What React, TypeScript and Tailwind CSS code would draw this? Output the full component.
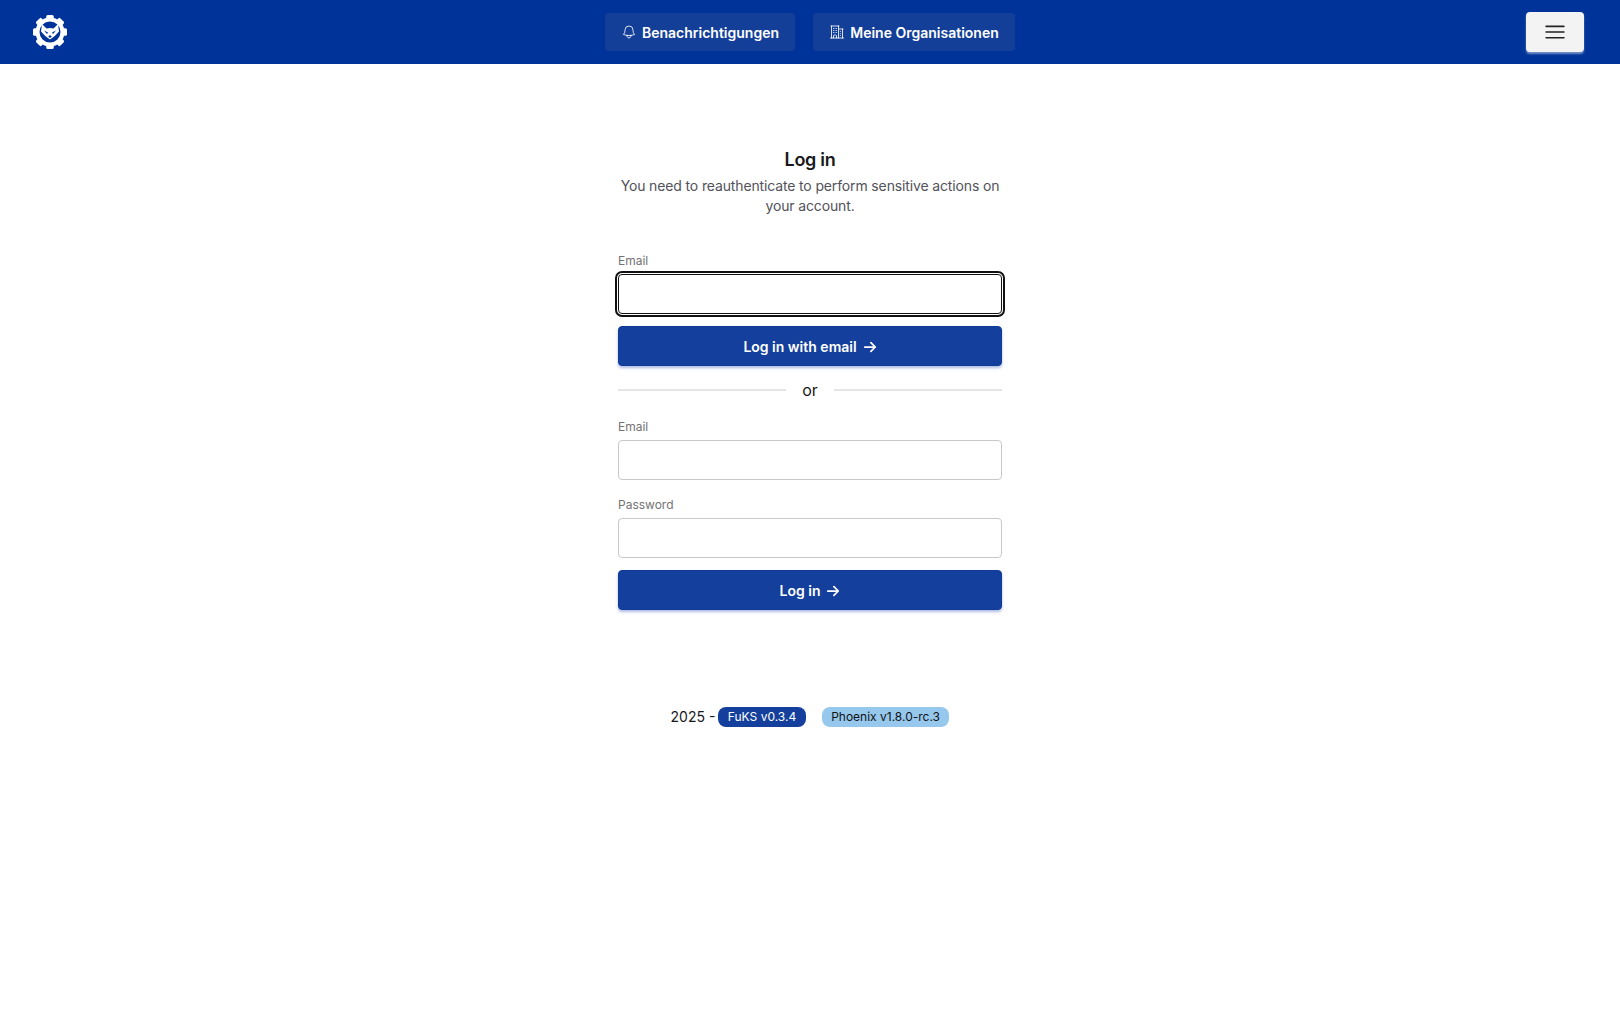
const buttonTexture = 'bg-[#143f9c] border border-[#0f3a98] shadow-[0_2px_3px_rgba(30,64,175,0.35)]';

function HeroIcon({ d, className, stroke = 1.5 }: { d: string; className: string; stroke?: number }) {
  return (
    <svg viewBox="0 0 24 24" fill="none" stroke="currentColor" strokeWidth={stroke} strokeLinecap="round" strokeLinejoin="round" className={className}>
      <path d={d} />
    </svg>
  );
}

const bellPath =
  'M14.857 17.082a23.848 23.848 0 0 0 5.454-1.31A8.967 8.967 0 0 1 18 9.75V9A6 6 0 0 0 6 9v.75a8.967 8.967 0 0 1-2.312 6.022c1.733.64 3.56 1.085 5.455 1.31m5.714 0a24.255 24.255 0 0 1-5.714 0m5.714 0a3 3 0 1 1-5.714 0';
const buildingPath =
  'M2.25 21h19.5m-18-18v18m10.5-18v18m6-13.5V21M6.75 6.75h.75m-.75 3h.75m-.75 3h.75m3-6h.75m-.75 3h.75m-.75 3h.75M6.75 21v-3.375c0-.621.504-1.125 1.125-1.125h2.25c.621 0 1.125.504 1.125 1.125V21M3 3h12m-.75 4.5H21m-3.75 3.75h.008v.008h-.008v-.008Zm0 3h.008v.008h-.008v-.008Zm0 3h.008v.008h-.008v-.008Z';
const menuPath = 'M3.75 6.75h16.5M3.75 12h16.5m-16.5 5.25h16.5';
const arrowPath = 'M13.5 4.5 21 12m0 0-7.5 7.5M21 12H3';

function Logo() {
  const teeth = [0, 45, 90, 135, 180, 225, 270, 315];
  return (
    <svg viewBox="0 0 34 34" className="w-[34px] h-[34px]">
      {teeth.map((angle) => (
        <rect key={angle} x="13.25" y="0" width="7.5" height="7" rx="1.5" fill="#fff" transform={`rotate(${angle} 17 17)`} />
      ))}
      <circle cx="17" cy="17" r="12.5" fill="#003399" stroke="#fff" strokeWidth="4" />
      {/* fox face */}
      <path d="M9 9 L13.5 13.5 Q17 12.5 20.5 13.5 L25 9 L26 16.5 Q23 20.5 17 24.5 Q11 20.5 8 16.5 Z" fill="#fff" />
      <path d="M11 15.5 L15 17.5 L14 19 Z M23 15.5 L19 17.5 L20 19 Z M15.25 21.5 L17 20 L18.75 21.5 L17 23 Z" fill="#003399" />
    </svg>
  );
}

function Field({ label, focused }: { label: string; focused?: boolean }) {
  return (
    <div>
      <label className="block text-xs leading-4 text-[#737373] mb-[5px]">{label}</label>
      <input
        type="text"
        className={
          focused
            ? 'block w-full h-[40px] rounded-[4px] bg-white border border-[#111] outline-2 outline-offset-1 outline-[#111]'
            : 'block w-full h-[40px] rounded-[4px] bg-white border border-[#c8c8c8]'
        }
      />
    </div>
  );
}

function SubmitButton({ label }: { label: string }) {
  return (
    <button className={`w-full h-[40px] rounded-[4px] flex items-center justify-center gap-[6px] pt-px text-sm font-semibold text-white ${buttonTexture}`}>
      {label}
      <HeroIcon d={arrowPath} className="w-[14px] h-[14px]" stroke={3} />
    </button>
  );
}

export default function App() {
  return (
    <div className="min-h-screen bg-white font-['Inter',sans-serif] text-[#18181b]">
      <header className="h-16 bg-[#003399] flex items-center justify-between pl-[33px] pr-9 relative">
        <Logo />
        <nav className="absolute left-[605px] top-[13px] flex gap-[18px]">
          <a className="h-[38px] w-[190px] rounded-[4px] bg-[#143f98] flex items-center justify-center gap-[5px] pt-px text-sm font-semibold text-white">
            <HeroIcon d={bellPath} className="w-4 h-4 -mt-px" stroke={1.25} />
            Benachrichtigungen
          </a>
          <a className="h-[38px] w-[202px] rounded-[4px] bg-[#143f98] flex items-center justify-center gap-[5px] pt-px text-sm font-semibold text-white">
            <HeroIcon d={buildingPath} className="w-4 h-4 -mt-px" stroke={1.25} />
            Meine Organisationen
          </a>
        </nav>
        <button className="w-[58px] h-[40px] rounded-[4px] bg-[#f3f3f3] shadow-[0_2px_2px_rgba(255,255,255,0.45)] flex items-center justify-center text-[#222]">
          <HeroIcon d={menuPath} className="w-[26px] h-[26px]" />
        </button>
      </header>

      <main className="w-96 mx-auto pt-[85px]">
        <div className="text-center">
          <h1 className="text-lg leading-[22px] font-semibold tracking-[-0.3px] text-[#18181b]">Log in</h1>
          <p className="mt-[5px] text-sm leading-5 tracking-[-0.14px] text-[#52525b]">You need to reauthenticate to perform sensitive actions on your account.</p>
        </div>

        <div className="mt-[37px] flex flex-col gap-3">
          <Field label="Email" focused />
          <SubmitButton label="Log in with email" />
        </div>

        <div className="mt-[12px] flex items-center gap-4 h-6">
          <div className="flex-1 h-[2px] bg-[#e5e5e5]" />
          <span className="text-base leading-6 text-[#18181b]">or</span>
          <div className="flex-1 h-[2px] bg-[#e5e5e5]" />
        </div>

        <div className="mt-[17px] flex flex-col gap-[17px]">
          <Field label="Email" />
          <Field label="Password" />
        </div>
        <div className="mt-3">
          <SubmitButton label="Log in" />
        </div>

        <footer className="mt-[97px] flex items-center justify-center text-sm text-[#18181b]">
          <span>2025 -</span>
          <span className="ml-[3px] h-5 px-[9.5px] rounded-lg bg-[#143f9c] text-white text-xs leading-5">FuKS v0.3.4</span>
          <span className="ml-4 h-5 px-[9.5px] rounded-lg bg-[#96c8ee] text-[#111] text-xs leading-5">Phoenix v1.8.0-rc.3</span>
        </footer>
      </main>
    </div>
  );
}
